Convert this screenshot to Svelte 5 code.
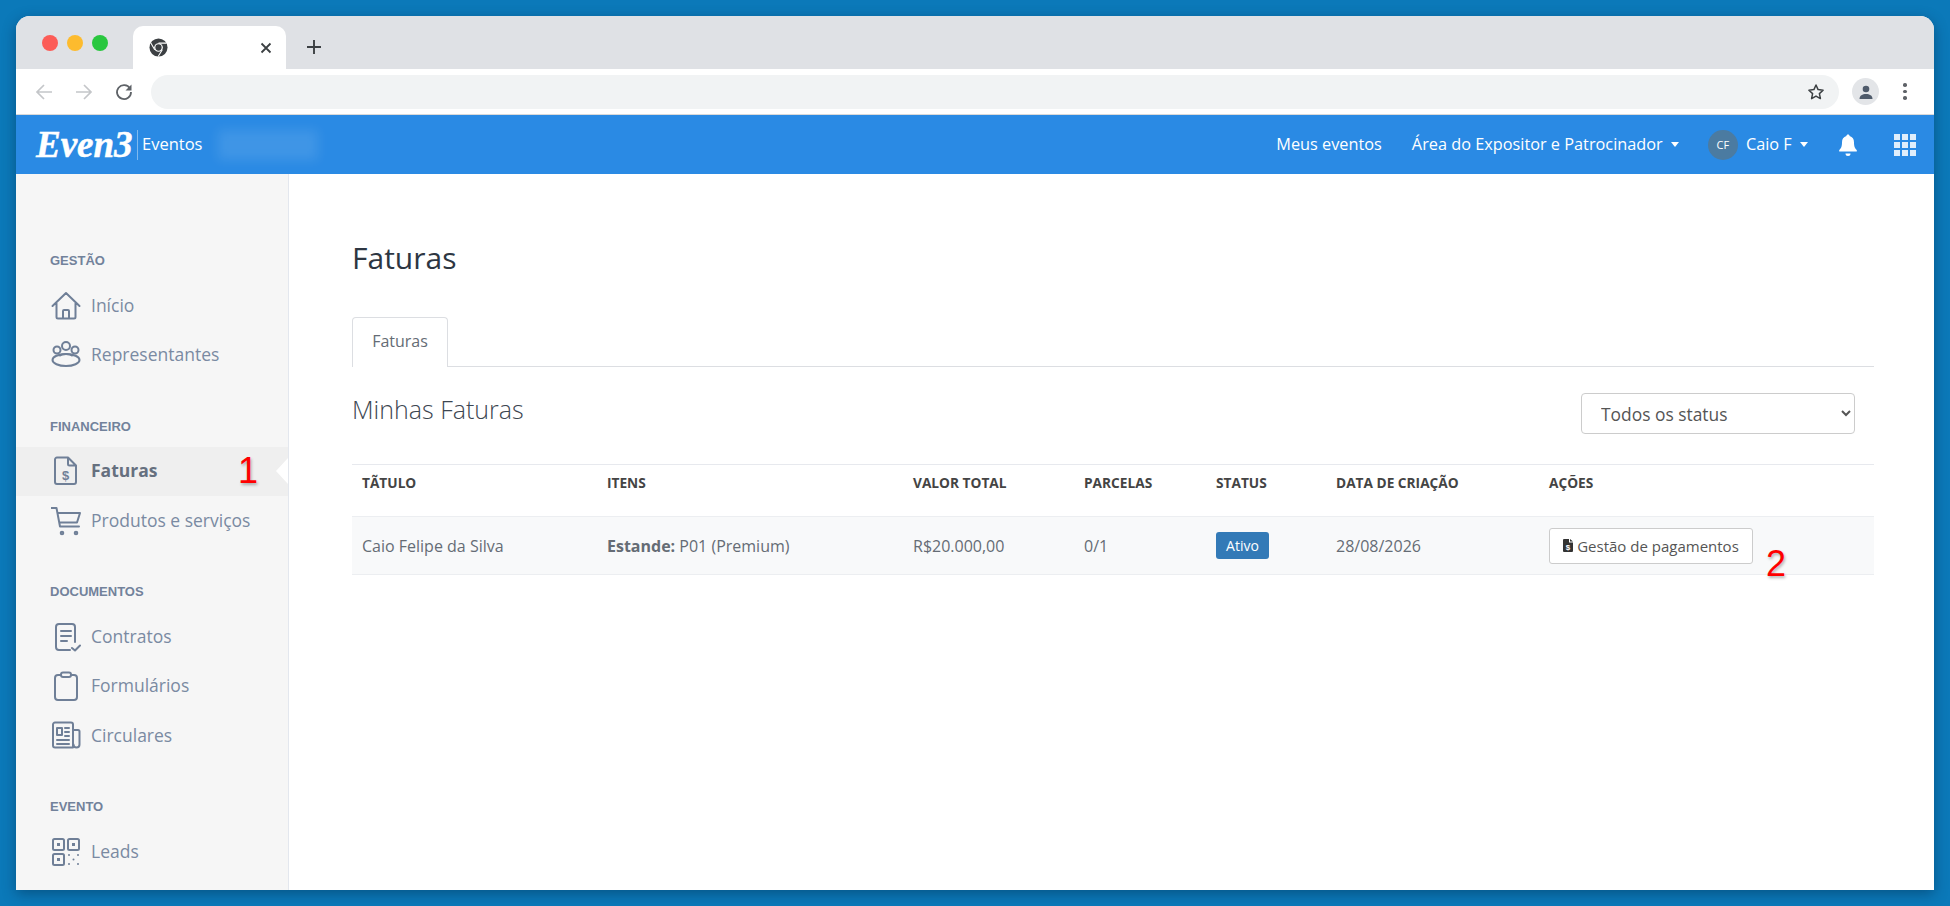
<script lang="ts">
  // Faturas page of the exhibitor area, shown inside a browser window

  interface NavItem {
    label: string;
    icon: string;
    active?: boolean;
    mark?: string;
  }

  const sections: { title: string; items: NavItem[] }[] = [
    {
      title: "GESTÃO",
      items: [
        { label: "Início", icon: "home" },
        { label: "Representantes", icon: "people" },
      ],
    },
    {
      title: "FINANCEIRO",
      items: [
        { label: "Faturas", icon: "invoice", active: true, mark: "1" },
        { label: "Produtos e serviços", icon: "cart" },
      ],
    },
    {
      title: "DOCUMENTOS",
      items: [
        { label: "Contratos", icon: "contract" },
        { label: "Formulários", icon: "clipboard" },
        { label: "Circulares", icon: "news" },
      ],
    },
    {
      title: "EVENTO",
      items: [{ label: "Leads", icon: "qr" }],
    },
  ];
</script>

<div class="window">
  <div class="tabstrip">
    <div class="lights">
      <span class="light red"></span>
      <span class="light yellow"></span>
      <span class="light green"></span>
    </div>
    <div class="tab">
      <svg class="favicon" viewBox="0 0 20 20" width="19" height="19">
        <circle cx="10" cy="10" r="9.5" fill="#3c4043" />
        <circle cx="10" cy="10" r="4.6" fill="#fff" />
        <circle cx="10" cy="10" r="3.3" fill="#3c4043" />
        <path d="M10 5.4h8.6M6 12.3 1.8 5M14 12.3 9.6 19.4" stroke="#fff" stroke-width="1.1" fill="none" />
      </svg>
      <svg class="tab-close" viewBox="0 0 12 12" width="12" height="12">
        <path d="M1.5 1.5l9 9M10.500 1.500l-9 9" stroke="#3c4043" stroke-width="1.8" />
      </svg>
    </div>
    <svg class="new-tab" viewBox="0 0 16 16" width="16" height="16">
      <path d="M8 1v14M1 8h14" stroke="#3c4043" stroke-width="1.9" />
    </svg>
  </div>

  <div class="toolbar">
    <svg viewBox="0 0 18 18" width="18" height="18">
      <path d="M17 9H2M9 2 2 9l7 7" stroke="#c4c6c9" stroke-width="1.7" fill="none" />
    </svg>
    <svg viewBox="0 0 18 18" width="18" height="18">
      <path d="M1 9h15M9 2l7 7-7 7" stroke="#c4c6c9" stroke-width="1.700" fill="none" />
    </svg>
    <svg viewBox="0 0 18 18" width="18" height="18">
      <path d="M15 5.500A7 7 0 1 0 16 9" stroke="#5f6368" stroke-width="1.8" fill="none" />
      <path d="M16.500 1.500v6h-6z" fill="#5f6368" />
    </svg>
    <div class="urlbar">
      <svg viewBox="0 0 18 18" width="18" height="18">
        <path d="M9 2l2.100 4.600 5 .6-3.700 3.400 1 5L9 13.100 4.600 15.600l1-5L1.900 7.200l5-.6z" stroke="#3c4043" stroke-width="1.500" fill="none" stroke-linejoin="round" />
      </svg>
    </div>
    <div class="profile">
      <svg viewBox="0 0 16 16" width="16" height="16">
        <circle cx="8" cy="5" r="3.300" fill="#4f5b6b" />
        <path d="M1.500 15c0-3.600 3-5 6.500-5s6.500 1.400 6.500 5z" fill="#4f5b6b" />
      </svg>
    </div>
    <div class="kebab"><span></span><span></span><span></span></div>
  </div>

  <header class="appbar">
    <div class="brand">
      <span class="logo">Even3</span>
      <span class="brand-name">Eventos</span>
      <span class="blurred"></span>
    </div>
    <nav class="topnav">
      <span class="meus">Meus eventos</span>
      <span class="area">Área do Expositor e Patrocinador <i class="caret"></i></span>
      <span class="user">
        <span class="avatar">CF</span>
        <span class="user-name">Caio F <i class="caret"></i></span>
      </span>
      <svg class="bell" viewBox="0 0 20 24" width="20" height="24">
        <path d="M10 1.500c1 0 1.600.7 1.600 1.600 3 .8 4.400 3.200 4.400 6.200 0 4.500 1 6 2.800 7.800v1.400H1.200v-1.400C3 15.300 4 13.800 4 9.300c0-3 1.400-5.400 4.400-6.200 0-.9.600-1.600 1.600-1.600z" fill="#fff" />
        <path d="M7.500 20.500h5a2.500 2.500 0 0 1-5 0z" fill="#fff" />
      </svg>
      <div class="apps">
        {#each Array(9) as _}
          <span></span>
        {/each}
      </div>
    </nav>
  </header>

  <div class="body">
    <aside class="sidebar">
      {#each sections as section}
        <div class="section">
          <div class="section-title">{section.title}</div>
          {#each section.items as item}
            <div class="nav-item" class:active={item.active}>
              <svg class="nav-icon" viewBox="0 0 30 30" width="30" height="30">
                {#if item.icon === "home"}
                  <path d="M1.500 15 15 2l13.500 13M5.500 12.500V26a1.500 1.500 0 0 0 1.500 1.500h16a1.500 1.500 0 0 0 1.500-1.500V12.500M12 27.500V20a1 1 0 0 1 1-1h4a1 1 0 0 1 1 1v7.500" />
                {:else if item.icon === "people"}
                  <circle cx="15" cy="6" r="4" />
                  <circle cx="6" cy="10" r="3.500" />
                  <circle cx="24" cy="10" r="3.500" />
                  <ellipse cx="15" cy="20" rx="13.500" ry="6" />
                  <path d="M9 15.500c2-2 10-2 12 0" />
                {:else if item.icon === "invoice"}
                  <path d="M6 1.500h11l8 8V26a2 2 0 0 1-2 2H6a2 2 0 0 1-2-2V3.500a2 2 0 0 1 2-2zM17 1.500V8a1.500 1.500 0 0 0 1.500 1.500H25" />
                  <text x="14.500" y="23.500" class="dollar">$</text>
                {:else if item.icon === "cart"}
                  <path d="M0 2h5.500l3.500 18.500h19M7 7h22l-3 9.500H9" />
                  <circle cx="11" cy="27" r="1.300" />
                  <circle cx="25" cy="27" r="1.300" />
                {:else if item.icon === "contract"}
                  <path d="M24 20V5a3 3 0 0 0-3-3H8a3 3 0 0 0-3 3v20a3 3 0 0 0 3 3h11M10 9h10M10 14h10M10 19h6M21 26l3 2.500 5-5" />
                {:else if item.icon === "clipboard"}
                  <path d="M10 4H7a3 3 0 0 0-3 3v19a3 3 0 0 0 3 3h16a3 3 0 0 0 3-3V7a3 3 0 0 0-3-3h-3" />
                  <rect x="10" y="1.500" width="10" height="4.500" rx="2" />
                {:else if item.icon === "news"}
                  <path d="M22 4.500v22H4a2 2 0 0 1-2-2V3.500a2 2 0 0 1 2-2h16a2 2 0 0 1 2 2zM22 9h5a1.500 1.500 0 0 1 1.500 1.500v13a3 3 0 0 1-6 0M6 19h12M6 23h12M14 7h4M14 11h4M14 15h4" />
                  <rect x="6" y="7" width="5" height="7" />
                {:else if item.icon === "qr"}
                  <rect x="2" y="2" width="11" height="11" rx="1.500" />
                  <rect x="17" y="2" width="11" height="11" rx="1.500" />
                  <rect x="2" y="17" width="11" height="11" rx="1.500" />
                  <rect x="6" y="6" width="3" height="3" class="solid" />
                  <rect x="21" y="6" width="3" height="3" class="solid" />
                  <rect x="6" y="21" width="3" height="3" class="solid" />
                  <circle cx="18" cy="18" r="1" class="solid" />
                  <circle cx="27" cy="18" r="1" class="solid" />
                  <circle cx="22.500" cy="22.500" r="1" class="solid" />
                  <circle cx="18" cy="27" r="1" class="solid" />
                  <circle cx="27" cy="27" r="1" class="solid" />
                {/if}
              </svg>
              <span class="nav-label">{item.label}</span>
              {#if item.mark}
                <span class="mark mark-nav">{item.mark}</span>
              {/if}
            </div>
          {/each}
        </div>
      {/each}
    </aside>

    <main class="content">
      <h1>Faturas</h1>
      <div class="tabs">
        <div class="tabs-item">Faturas</div>
      </div>
      <div class="list-head">
        <h2>Minhas Faturas</h2>
        <select>
          <option>Todos os status</option>
        </select>
      </div>
      <table>
        <thead>
          <tr>
            <th class="c1">TÃTULO</th>
            <th class="c2">ITENS</th>
            <th class="c3">VALOR TOTAL</th>
            <th class="c4">PARCELAS</th>
            <th class="c5">STATUS</th>
            <th class="c6">DATA DE CRIAÇÃO</th>
            <th>AÇÕES</th>
          </tr>
        </thead>
        <tbody>
          <tr>
            <td>Caio Felipe da Silva</td>
            <td><b>Estande:</b> P01 (Premium)</td>
            <td>R$20.000,00</td>
            <td>0/1</td>
            <td><span class="badge">Ativo</span></td>
            <td>28/08/2026</td>
            <td>
              <span class="action">
                <button>
                  <svg viewBox="0 0 10 13" width="10" height="13">
                    <path d="M1 0h5v3.500h4V12a1 1 0 0 1-1 1H1a1 1 0 0 1-1-1V1a1 1 0 0 1 1-1zM7 0l3 2.500H7z" fill="#333" />
                    <text x="5" y="11" class="btn-dollar">$</text>
                  </svg>
                  Gestão de pagamentos
                </button>
                <span class="mark mark-btn">2</span>
              </span>
            </td>
          </tr>
        </tbody>
      </table>
    </main>
  </div>
</div>

<style>
  :global(body) {
    margin: 0;
    background: #0b79b9;
    overflow: hidden;
  }

  .window {
    width: 1918px;
    height: 874px;
    margin: 16px;
    display: flex;
    flex-direction: column;
    border-radius: 14px 14px 0 0;
    overflow: hidden;
    background: #fff;
    box-shadow: 0 4px 14px rgba(0, 40, 70, 0.45);
    font-family: "Open Sans", sans-serif;
  }

  /* browser chrome */
  .tabstrip {
    height: 53px;
    flex: none;
    display: flex;
    align-items: flex-end;
    background: #dfe1e5;
  }

  .lights {
    display: flex;
    gap: 9px;
    margin: 0 25px 18px 26px;
  }

  .light {
    width: 16px;
    height: 16px;
    border-radius: 50%;
  }

  .red { background: #fc5c57; }
  .yellow { background: #fdbb2e; }
  .green { background: #29c73f; }

  .tab {
    width: 153px;
    height: 43px;
    background: #fff;
    border-radius: 10px 10px 0 0;
    display: flex;
    align-items: center;
    justify-content: space-between;
    padding: 0 14px 0 16px;
    box-sizing: border-box;
  }

  .new-tab {
    margin: 0 0 14px 20px;
  }

  .toolbar {
    height: 46px;
    flex: none;
    box-sizing: border-box;
    background: #fff;
    border-bottom: 1px solid #d9d9d9;
    display: flex;
    align-items: center;
    padding: 0 0 0 19px;
    gap: 22px;
  }

  .urlbar {
    width: 1688px;
    height: 34px;
    margin-left: -4px;
    border-radius: 17px;
    background: #f1f3f4;
    display: flex;
    align-items: center;
    justify-content: flex-end;
    padding-right: 14px;
    box-sizing: border-box;
  }

  .profile {
    width: 27px;
    height: 27px;
    margin-left: -9px;
    border-radius: 50%;
    background: #e3e5e8;
    display: flex;
    align-items: center;
    justify-content: center;
  }

  .kebab {
    display: flex;
    flex-direction: column;
    gap: 3px;
    margin-left: 2px;
  }

  .kebab span {
    width: 3.500px;
    height: 3.500px;
    border-radius: 50%;
    background: #5f6368;
  }

  /* app header */
  .appbar {
    height: 59px;
    flex: none;
    background: #2a8ae4;
    color: #fff;
    display: flex;
    align-items: center;
    justify-content: space-between;
    padding: 0 18px 0 20px;
  }

  .brand {
    display: flex;
    align-items: center;
  }

  .logo {
    font-family: "Liberation Serif", serif;
    font-style: italic;
    font-weight: 700;
    font-size: 37px;
    line-height: 30px;
    width: 101px;
    -webkit-text-stroke: 0.5px #fff;
    border-right: 1px solid rgba(255, 255, 255, 0.4);
  }

  .brand-name {
    font-size: 16.500px;
    font-weight: 500;
    margin-left: 4px;
    padding-bottom: 2px;
  }

  .blurred {
    width: 100px;
    height: 30px;
    margin-left: 16px;
    background: rgba(255, 255, 255, 0.1);
    filter: blur(6px);
  }

  .topnav {
    display: flex;
    align-items: center;
    font-size: 16.300px;
  }

  .meus {
    margin-right: 30px;
    padding-bottom: 2px;
  }

  .area {
    margin-right: 29px;
    padding-bottom: 2px;
  }

  .caret {
    display: inline-block;
    width: 0;
    height: 0;
    margin-left: 4px;
    vertical-align: 3px;
    border-left: 4.500px solid transparent;
    border-right: 4.500px solid transparent;
    border-top: 5px solid #fff;
  }

  .user {
    display: flex;
    align-items: center;
    margin-right: 30px;
    white-space: pre;
  }

  .user-name {
    padding-bottom: 2px;
  }

  .avatar {
    width: 30px;
    height: 30px;
    margin-right: 8px;
    border-radius: 50%;
    background: #4b7ba1;
    font-size: 11px;
    display: flex;
    align-items: center;
    justify-content: center;
  }

  .bell {
    margin-right: 36px;
  }

  .apps {
    display: grid;
    grid-template-columns: repeat(3, 6px);
    grid-auto-rows: 6px;
    gap: 2px;
  }

  .apps span {
    background: rgba(255, 255, 255, 0.85);
  }

  /* sidebar */
  .body {
    flex: 1;
    display: flex;
    min-height: 0;
  }

  .sidebar {
    width: 273px;
    flex: none;
    box-sizing: border-box;
    padding-top: 77px;
    background: #f6f6f6;
    border-right: 1px solid #e3e7ee;
    overflow: hidden;
  }

  .section {
    margin-bottom: 36.500px;
  }

  .section-title {
    font-family: "Liberation Sans", sans-serif;
    font-weight: 700;
    font-size: 13px;
    line-height: 20px;
    color: #72829b;
    padding-left: 34px;
    margin-bottom: 10px;
  }

  .nav-item {
    position: relative;
    height: 49.500px;
    display: flex;
    align-items: center;
    gap: 10px;
    padding-left: 35px;
    color: #7a8aa2;
    font-size: 17.500px;
  }

  .nav-label {
    padding-bottom: 2px;
  }

  .nav-item.active {
    background: #efefef;
    color: #66707f;
    font-weight: 700;
  }

  .nav-item.active::after {
    content: "";
    position: absolute;
    right: 0;
    top: 50%;
    margin-top: -13px;
    border-top: 13px solid transparent;
    border-bottom: 13px solid transparent;
    border-right: 12px solid #fff;
  }

  .nav-icon {
    flex: none;
    fill: none;
    stroke: #6f7f97;
    stroke-width: 2;
    stroke-linejoin: round;
    stroke-linecap: round;
  }

  .nav-icon .solid {
    fill: #6f7f97;
    stroke: none;
  }

  .dollar {
    font-family: "Liberation Sans", sans-serif;
    font-size: 13px;
    font-weight: 700;
    text-anchor: middle;
    fill: #6f7f97;
    stroke: none;
  }

  /* annotations drawn over the screenshot */
  .mark {
    position: absolute;
    font-family: "Liberation Sans", sans-serif;
    font-weight: 400;
    font-size: 36px;
    color: #f00;
    line-height: 36px;
    text-shadow: 1px 2px 3px rgba(0, 0, 0, 0.3);
  }

  .mark-nav {
    left: 222px;
    top: 6px;
  }

  .mark-btn {
    left: 217px;
    top: 18px;
  }

  /* main */
  .content {
    flex: 1;
    min-width: 0;
    padding: 0 60px 0 63px;
    color: #656c75;
  }

  h1 {
    margin: 65px 0 0;
    font-size: 30px;
    font-weight: 400;
    line-height: 38px;
    color: #2d3642;
  }

  .tabs {
    margin-top: 40px;
    border-bottom: 1px solid #dcdee2;
    height: 49px;
  }

  .tabs-item {
    box-sizing: border-box;
    width: 96px;
    height: 50px;
    border: 1px solid #dcdee2;
    border-bottom: 0;
    border-radius: 4px 4px 0 0;
    background: #fff;
    text-align: center;
    line-height: 47px;
    font-size: 16px;
  }

  .list-head {
    height: 97px;
    display: flex;
    justify-content: space-between;
    align-items: flex-start;
  }

  h2 {
    margin: 26px 0 0;
    font-size: 25px;
    font-weight: 300;
    line-height: 33px;
    color: #3c4651;
  }

  select {
    width: 274px;
    height: 41px;
    margin: 26px 19px 0 0;
    padding: 0 15px;
    background: #fff;
    border: 1px solid #ccc;
    border-radius: 4px;
    font-family: "Open Sans", sans-serif;
    font-size: 17.400px;
    color: #555;
  }

  table {
    width: 100%;
    border-collapse: collapse;
    table-layout: fixed;
    font-size: 16px;
  }

  th {
    height: 52px;
    box-sizing: border-box;
    padding: 0 10px 16px;
    border-top: 1px solid #e7e9ee;
    border-bottom: 1px solid #eceef1;
    text-align: left;
    font-size: 13.700px;
    font-weight: 700;
    color: #444;
  }

  .c1 { width: 245px; }
  .c2 { width: 306px; }
  .c3 { width: 171px; }
  .c4 { width: 132px; }
  .c5 { width: 120px; }
  .c6 { width: 213px; }

  td {
    height: 58px;
    box-sizing: border-box;
    padding: 0 10px;
    background: #f8f9fa;
    border-bottom: 1px solid #eceef1;
    white-space: nowrap;
  }

  .badge {
    display: inline-block;
    width: 53px;
    height: 27px;
    line-height: 27px;
    text-align: center;
    border-radius: 3px;
    background: #337ab7;
    color: #fff;
    font-size: 14px;
  }

  .action {
    position: relative;
    display: inline-block;
  }

  button {
    width: 204px;
    height: 36px;
    padding: 0;
    background: #fff;
    border: 1px solid #ccc;
    border-radius: 3px;
    font-family: "Open Sans", sans-serif;
    font-size: 15px;
    color: #555;
    display: flex;
    align-items: center;
    justify-content: center;
    gap: 4px;
  }

  .btn-dollar {
    font-family: "Liberation Sans", sans-serif;
    font-size: 8px;
    font-weight: 700;
    text-anchor: middle;
    fill: #fff;
  }
</style>
